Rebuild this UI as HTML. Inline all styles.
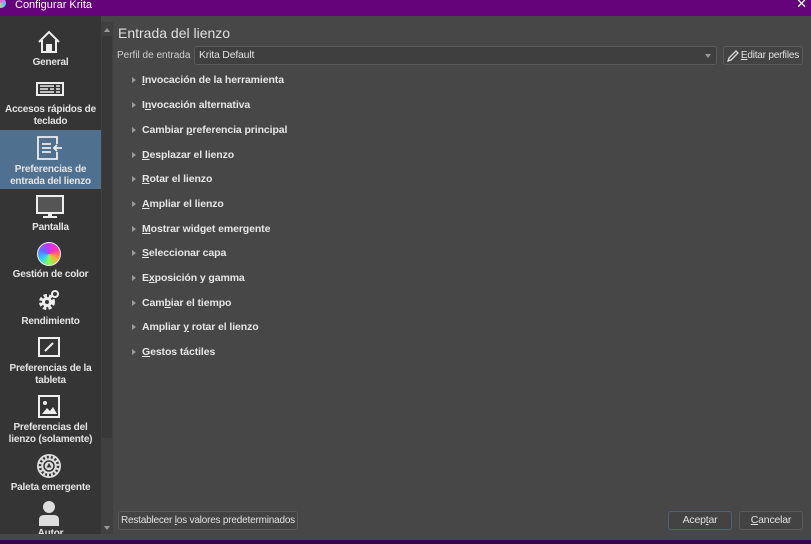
<!DOCTYPE html>
<html><head><meta charset="utf-8"><style>
*{margin:0;padding:0;box-sizing:border-box}
body{width:811px;height:544px;overflow:hidden;background:#474747;font-family:"Liberation Sans",sans-serif;color:#dcdcdc;position:relative;font-size:11px;white-space:nowrap}
.title{position:absolute;left:0;top:0;width:811px;height:16px;background:#65037a;color:#fff;font-size:11px;line-height:11px}
.side{position:absolute;left:0;top:16px;width:101px;height:518px;background:#353535;overflow:hidden}
.sb{position:absolute;left:101px;top:22px;width:12px;height:512px;background:#404040}
.sb .th{position:absolute;left:1px;top:14px;width:10px;height:402px;background:#383838;border-radius:2px}
.sel{position:absolute;left:0;top:114px;width:101px;height:59px;background:#50708f}
.lab{position:absolute;width:101px;text-align:center;font-weight:bold;font-size:10px;line-height:12px;color:#e4e4e4;letter-spacing:-0.2px}
svg{position:absolute}
.h{position:absolute;left:118px;top:25px;font-size:14px;color:#e0e0e0}
.row{position:absolute;left:142px;font-weight:bold;font-size:10.5px;color:#e6e6e6;letter-spacing:-0.1px}
.arr{position:absolute;left:132px;width:0;height:0;border-left:4px solid #9a9a9a;border-top:3px solid transparent;border-bottom:3px solid transparent}
.btn{position:absolute;height:19px;border:1px solid #5a5a5a;border-radius:3px;background:#434343;font-size:10.5px;line-height:17px;text-align:center;color:#e0e0e0;letter-spacing:-0.2px}
u{text-decoration:underline}
.bot{position:absolute;left:0;top:540px;width:811px;height:4px;background:#3a0548}
</style></head><body>
<div class="title"><span style="position:absolute;left:-4px;top:-2px;width:10px;height:10px;border-radius:50%;background:conic-gradient(#f5c,#5cf,#fc4,#f5c)"></span><span style="position:absolute;left:15px;top:0">Configurar Krita</span><span style="position:absolute;right:4px;top:-2px;font-size:13px">✕</span></div>
<div class="side">
<div class="sel"></div>
<svg style="left:37px;top:14px" width="24" height="24" viewBox="0 0 24 24" fill="none" stroke="#eee" stroke-width="2"><path d="M2 12 L12 2 L22 12 M5 10 V22 H19 V10"/><rect x="10" y="15" width="4" height="7" fill="#eee"/></svg>
<div class="lab" style="top:41px">General</div>
<svg style="left:36px;top:66px" width="28" height="14" viewBox="0 0 28 14"><rect x="1" y="1" width="26" height="12" fill="none" stroke="#eee" stroke-width="2"/><path d="M4 4h14M20 4h4M4 7h8M14 7h4M20 7h4M4 10h14M20 10h4" stroke="#eee" stroke-width="1.5"/></svg>
<div class="lab" style="top:88px">Accesos rápidos de<br>teclado</div>
<svg style="left:37px;top:120px" width="26" height="24" viewBox="0 0 26 24" fill="none" stroke="#eee" stroke-width="1.8"><path d="M20 8V1H1V23H20V16"/><path d="M5 8h9M5 12h9M5 16h9M17 12h8M20 9l-3 3 3 3"/></svg>
<div class="lab" style="top:148px">Preferencias de<br>entrada del lienzo</div>
<svg style="left:36px;top:179px" width="28" height="24" viewBox="0 0 28 24"><rect x="1" y="1" width="26" height="17" fill="#555" stroke="#eee" stroke-width="2"/><rect x="12" y="18" width="4" height="3" fill="#eee"/><rect x="7" y="21" width="14" height="2" fill="#eee"/></svg>
<div class="lab" style="top:206px">Pantalla</div>
<div style="position:absolute;left:37px;top:226px;width:24px;height:24px;border-radius:50%;border:1.5px solid #eee;background:conic-gradient(#c3f,#f3a,#fa3,#8f5,#3cf,#66f,#c3f)"></div>
<div class="lab" style="top:253px">Gestión de color</div>
<svg style="left:38px;top:273px" width="22" height="22" viewBox="0 0 22 22"><circle cx="9" cy="13" r="6" fill="none" stroke="#eee" stroke-width="4" stroke-dasharray="3 2"/><circle cx="9" cy="13" r="5" fill="#eee"/><circle cx="9" cy="13" r="2" fill="#353535"/><circle cx="17" cy="5" r="3" fill="none" stroke="#eee" stroke-width="2"/></svg>
<div class="lab" style="top:300px">Rendimiento</div>
<svg style="left:38px;top:321px" width="22" height="20" viewBox="0 0 22 20"><rect x="1" y="1" width="20" height="18" fill="none" stroke="#eee" stroke-width="2"/><path d="M7 14 L15 6" stroke="#eee" stroke-width="2"/></svg>
<div class="lab" style="top:347px">Preferencias de la<br>tableta</div>
<svg style="left:38px;top:379px" width="22" height="23" viewBox="0 0 22 23"><rect x="1" y="1" width="20" height="21" fill="none" stroke="#eee" stroke-width="2"/><circle cx="7" cy="8" r="2" fill="#eee"/><path d="M4 19 L9 13 L12 16 L15 12 L19 19Z" fill="#eee"/></svg>
<div class="lab" style="top:406px">Preferencias del<br>lienzo (solamente)</div>
<svg style="left:36px;top:437px" width="26" height="26" viewBox="0 0 26 26"><circle cx="13" cy="13" r="12" fill="#ddd"/><circle cx="13" cy="13" r="9" fill="none" stroke="#353535" stroke-width="2.5" stroke-dasharray="2 2"/><circle cx="13" cy="13" r="5" fill="#ddd" stroke="#353535" stroke-width="1.5"/><path d="M13 10l-2.5 4.5h5z" fill="#353535"/></svg>
<div class="lab" style="top:466px">Paleta emergente</div>
<svg style="left:38px;top:484px" width="22" height="26" viewBox="0 0 22 26"><circle cx="11" cy="7" r="6" fill="#ddd"/><path d="M1 26 V20 Q1 15 6 15 H16 Q21 15 21 20 V26Z" fill="#ddd"/></svg>
<div class="lab" style="top:512px">Autor</div>
</div>
<div class="sb"><div style="position:absolute;left:3px;top:6px;border-bottom:4px solid #999;border-left:3px solid transparent;border-right:3px solid transparent"></div><div class="th"></div><div style="position:absolute;left:3px;top:504px;border-top:4px solid #999;border-left:3px solid transparent;border-right:3px solid transparent"></div></div>
<div class="h">Entrada del lienzo</div>
<div style="position:absolute;left:117px;top:50px;font-size:10px;color:#d0d0d0">Perfil de entrada</div>
<div class="btn" style="left:194px;top:46px;width:523px;text-align:left;padding-left:4px;background:#3f3f3f">Krita Default<span style="position:absolute;right:5px;top:7px;border-top:4px solid #999;border-left:3px solid transparent;border-right:3px solid transparent"></span></div>
<div class="btn" style="left:723px;top:46px;width:80px;text-align:right;padding-right:3px;font-size:10px"><svg style="left:3px;top:3px" width="12" height="12" viewBox="0 0 12 12" fill="none" stroke="#ddd" stroke-width="1.3"><path d="M1 11 L2 8 L9 1 L11 3 L4 10Z"/></svg><u>E</u>ditar perfiles</div>
<div class="arr" style="top:77px"></div><div class="row" style="top:74px"><u>I</u>nvocación de la herramienta</div>
<div class="arr" style="top:102px"></div><div class="row" style="top:99px">I<u>n</u>vocación alternativa</div>
<div class="arr" style="top:127px"></div><div class="row" style="top:124px">Cambiar <u>p</u>referencia principal</div>
<div class="arr" style="top:152px"></div><div class="row" style="top:149px"><u>D</u>esplazar el lienzo</div>
<div class="arr" style="top:176px"></div><div class="row" style="top:173px"><u>R</u>otar el lienzo</div>
<div class="arr" style="top:201px"></div><div class="row" style="top:198px"><u>A</u>mpliar el lienzo</div>
<div class="arr" style="top:226px"></div><div class="row" style="top:223px"><u>M</u>ostrar widget emergente</div>
<div class="arr" style="top:250px"></div><div class="row" style="top:247px"><u>S</u>eleccionar capa</div>
<div class="arr" style="top:275px"></div><div class="row" style="top:272px">E<u>x</u>posición y gamma</div>
<div class="arr" style="top:300px"></div><div class="row" style="top:297px">Cam<u>b</u>iar el tiempo</div>
<div class="arr" style="top:324px"></div><div class="row" style="top:321px">Ampliar <u>y</u> rotar el lienzo</div>
<div class="arr" style="top:349px"></div><div class="row" style="top:346px"><u>G</u>estos táctiles</div>
<div class="btn" style="left:118px;top:511px;width:180px;font-size:10px">Restablecer <u>l</u>os valores predeterminados</div>
<div class="btn" style="left:668px;top:511px;width:64px;border-color:#4d6278">Acep<u>t</u>ar</div>
<div class="btn" style="left:739px;top:511px;width:64px"><u>C</u>ancelar</div>
<div class="bot"></div>
</body></html>
